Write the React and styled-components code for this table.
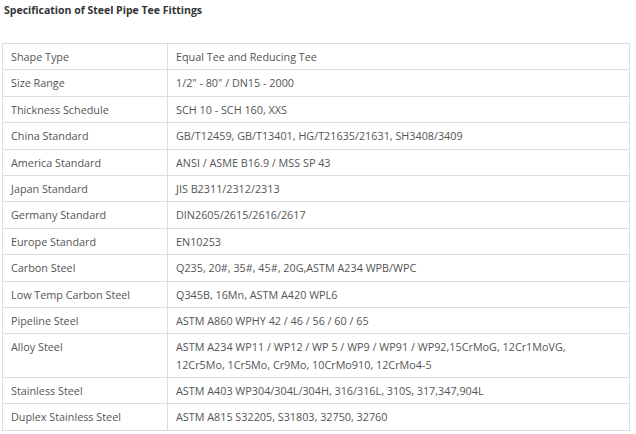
import React from "react";
import styled, { createGlobalStyle } from "styled-components";

const Global = createGlobalStyle`
  html, body { margin: 0; padding: 0; background: #fff; }
  body { font-family: "Open Sans", "Noto Sans", sans-serif; }
`;

const Page = styled.div`
  padding: 2px 6px 0 2px;
  width: 636px;
  box-sizing: border-box;
`;

const Title = styled.h3`
  margin: 0 0 25px 2px;
  font-size: 10.5px;
  line-height: 16px;
  font-weight: 700;
  color: #333;
`;

const Table = styled.table`
  border-collapse: collapse;
  width: 628px;
  table-layout: fixed;
`;

const Cell = styled.td`
  border: 1px solid #dddddd;
  padding: 4.1px 8px 4.1px 8px;
  font-size: 10.8px;
  line-height: 17.2px;
  color: #555;
  vertical-align: top;
  width: ${(p) => (p.$label ? "148px" : "auto")};
`;

const rows = [
  ["Shape Type", ["Equal Tee and Reducing Tee"]],
  ["Size Range", ["1/2\" - 80\" / DN15 - 2000"]],
  ["Thickness Schedule", ["SCH 10 - SCH 160, XXS"]],
  ["China Standard", ["GB/T12459, GB/T13401, HG/T21635/21631, SH3408/3409"]],
  ["America Standard", ["ANSI / ASME B16.9 / MSS SP 43"]],
  ["Japan Standard", ["JIS B2311/2312/2313"]],
  ["Germany Standard", ["DIN2605/2615/2616/2617"]],
  ["Europe Standard", ["EN10253"]],
  ["Carbon Steel", ["Q235, 20#, 35#, 45#, 20G,ASTM A234 WPB/WPC"]],
  ["Low Temp Carbon Steel", ["Q345B, 16Mn, ASTM A420 WPL6"]],
  ["Pipeline Steel", ["ASTM A860 WPHY 42 / 46 / 56 / 60 / 65"]],
  [
    "Alloy Steel",
    [
      "ASTM A234 WP11 / WP12 / WP 5 / WP9 / WP91 / WP92,15CrMoG, 12Cr1MoVG,",
      "12Cr5Mo, 1Cr5Mo, Cr9Mo, 10CrMo910, 12CrMo4-5",
    ],
  ],
  ["Stainless Steel", ["ASTM A403 WP304/304L/304H, 316/316L, 310S, 317,347,904L"]],
  ["Duplex Stainless Steel", ["ASTM A815 S32205, S31803, 32750, 32760"]],
];

export default function App() {
  return (
    <Page>
      <Global />
      <Title>Specification of Steel Pipe Tee Fittings</Title>
      <Table>
        <tbody>
          {rows.map(([k, lines]) => (
            <tr key={k}>
              <Cell $label>{k}</Cell>
              <Cell>
                {lines.map((l, i) => (
                  <React.Fragment key={i}>
                    {i > 0 && <br />}
                    {l}
                  </React.Fragment>
                ))}
              </Cell>
            </tr>
          ))}
        </tbody>
      </Table>
    </Page>
  );
}
